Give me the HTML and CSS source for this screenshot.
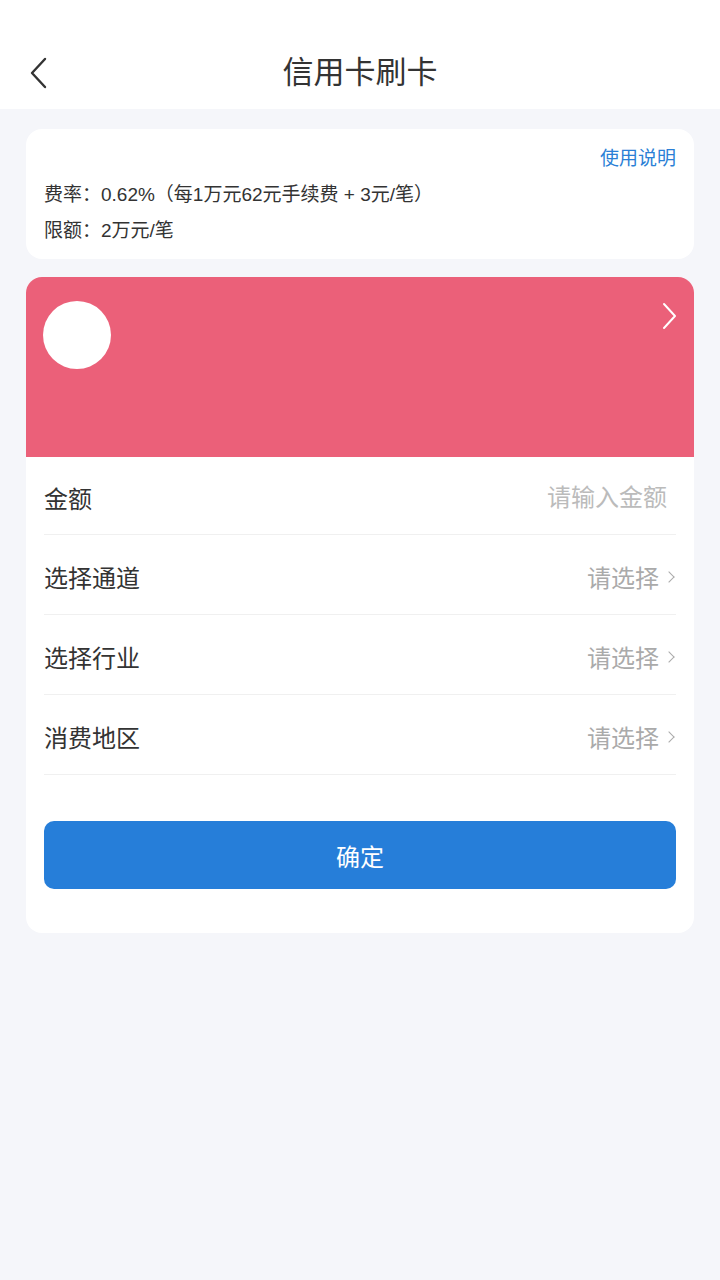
FILE: index.html
```html
<!DOCTYPE html>
<html lang="zh-CN">
<head>
    <meta charset="UTF-8">
    <meta name="viewport" content="width=device-width, initial-scale=1.0">
    <title>信用卡刷卡</title>
    <link rel="stylesheet" href="styles.css">
</head>
<body>
    <header class="topbar">
        <a class="back" href="#">
            <svg width="18" height="32" viewBox="0 0 18 32"><path d="M16 2 L3 16 L16 30" fill="none" stroke="#333" stroke-width="2.4" stroke-linecap="round" stroke-linejoin="round"/></svg>
        </a>
        <h1>信用卡刷卡</h1>
        <span></span>
    </header>

    <main class="page">
        <section class="info-card">
            <div class="help"><a href="#">使用说明</a></div>
            <p>费率：0.62%（每1万元62元手续费 + 3元/笔）</p>
            <p>限额：2万元/笔</p>
        </section>

        <section class="pay-card">
            <div class="bank-card">
                <div class="bank-logo"></div>
                <svg class="bank-arrow" width="16" height="28" viewBox="0 0 16 28"><path d="M2 2 L13 14 L2 26" fill="none" stroke="#fff" stroke-width="2" stroke-linecap="round" stroke-linejoin="round"/></svg>
            </div>

            <form class="pay-form">
                <label class="row">
                    <span class="row-label">金额</span>
                    <input class="row-input" type="text" placeholder="请输入金额">
                </label>
                <div class="row">
                    <span class="row-label">选择通道</span>
                    <span class="row-value">请选择 <i class="arrow"></i></span>
                </div>
                <div class="row">
                    <span class="row-label">选择行业</span>
                    <span class="row-value">请选择 <i class="arrow"></i></span>
                </div>
                <div class="row">
                    <span class="row-label">消费地区</span>
                    <span class="row-value">请选择 <i class="arrow"></i></span>
                </div>

                <button type="submit" class="submit">确定</button>
            </form>
        </section>
    </main>
</body>
</html>
```

FILE: styles.css
```css
body {
    margin: 0;
    background: #f5f6fa;
    font-family: "Liberation Sans", "Noto Sans CJK SC", sans-serif;
    color: #333;
}

.topbar {
    height: 109px;
    box-sizing: border-box;
    padding-top: 37px;
    background: #fff;
    display: grid;
    grid-template-columns: 1fr auto 1fr;
    align-items: center;
}

.back {
    display: flex;
    align-items: center;
    padding-left: 29px;
    height: 72px;
}

.topbar h1 {
    margin: 0;
    font-size: 31px;
    font-weight: 400;
    line-height: 72px;
    color: #333;
}

.page {
    padding: 20px 26px 0;
}

.info-card {
    background: #fff;
    border-radius: 16px;
    padding: 12px 18px 10px;
    font-size: 19px;
    line-height: 36px;
}

.info-card p {
    margin: 0;
    color: #333;
}

.fee {
    letter-spacing: 0.2px;
}

.help {
    text-align: right;
}

.help a {
    color: #2b7fd6;
    text-decoration: none;
}

.pay-card {
    margin-top: 18px;
    background: #fff;
    border-radius: 16px;
    overflow: hidden;
}

.bank-card {
    height: 180px;
    background: #eb6079;
    display: flex;
    justify-content: space-between;
    align-items: flex-start;
    padding: 24px 16px 0 17px;
    box-sizing: border-box;
}

.bank-logo {
    width: 68px;
    height: 68px;
    border-radius: 50%;
    background: #fff;
}

.bank-arrow {
    margin-top: 1px;
}

.pay-form {
    padding: 0 18px 44px;
}

.row {
    height: 80px;
    box-sizing: border-box;
    border-bottom: 1px solid #f0f0f0;
    display: flex;
    align-items: center;
    justify-content: space-between;
    font-size: 24px;
    padding-top: 4px;
}

.row:first-child {
    height: 78px;
}

.row-label {
    color: #333;
}

.row-input {
    border: none;
    outline: none;
    text-align: right;
    font: inherit;
    color: #333;
    width: 300px;
    padding: 0 9px 0 0;
    background: transparent;
}

.row-input::placeholder {
    color: #bbb;
}

.row-value {
    color: #aaa;
    display: flex;
    align-items: center;
}

.arrow {
    display: inline-block;
    width: 7px;
    height: 7px;
    border-top: 1.5px solid #aaa;
    border-right: 1.5px solid #aaa;
    transform: rotate(45deg);
    margin-left: 6px;
    margin-right: 3px;
}

.submit {
    display: block;
    width: 100%;
    height: 68px;
    margin-top: 46px;
    border: none;
    border-radius: 10px;
    background: #267ed9;
    color: #fff;
    font: inherit;
    font-size: 24px;
    cursor: pointer;
}
```
